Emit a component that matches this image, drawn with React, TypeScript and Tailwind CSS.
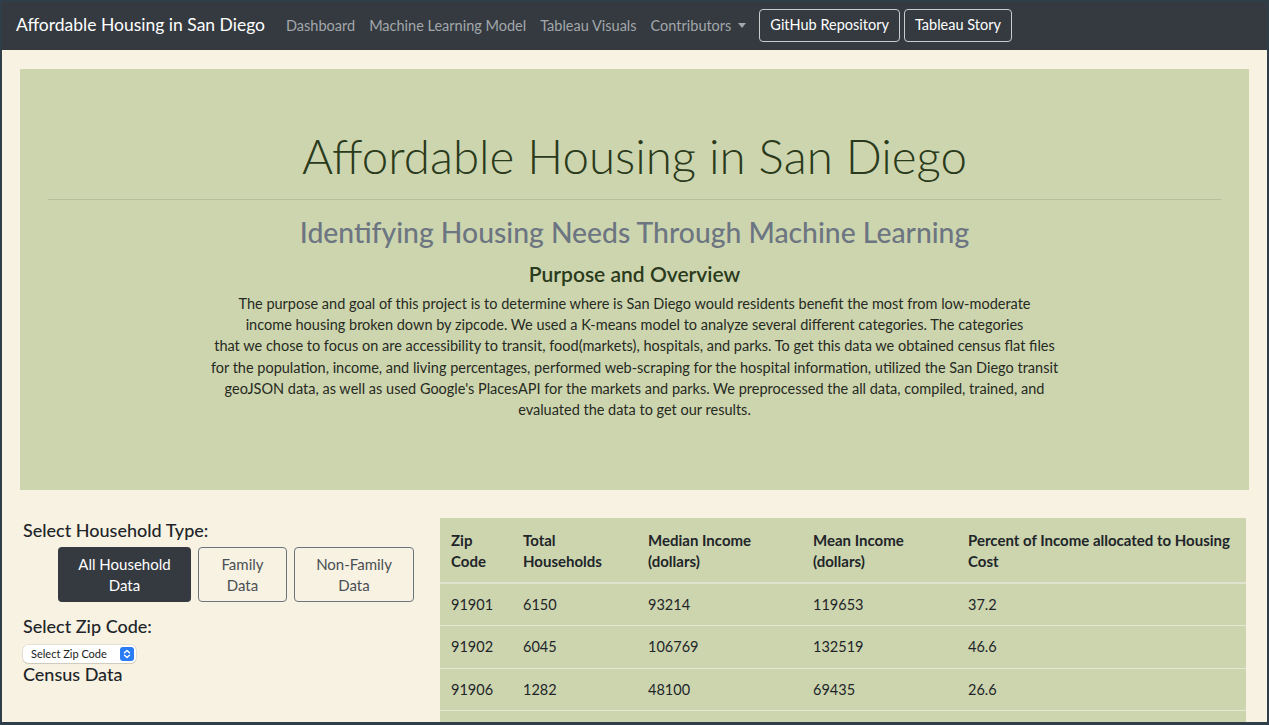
import React from "react";

const rows = [
  ["91901", "6150", "93214", "119653", "37.2"],
  ["91902", "6045", "106769", "132519", "46.6"],
  ["91906", "1282", "48100", "69435", "26.6"],
];

export default function App() {
  return (
    <div
      className="w-[1269px] h-[725px] overflow-hidden bg-[#f8f2e2] border-x-2 border-t-2 border-b-[3px] border-[#2f3e48]"
      style={{ fontFamily: "Lato, 'Liberation Sans', sans-serif" }}
    >
      {/* Navbar */}
      <nav className="h-[48px] bg-[#343a40] flex items-center pl-[14px]">
        <span className="text-white text-[17.5px] mr-[21px] -mt-[1px]">Affordable Housing in San Diego</span>
        <div className="flex items-center gap-[14px] text-[14.5px] text-[#a3a7ab] -mt-[1px]">
          <span>Dashboard</span>
          <span>Machine Learning Model</span>
          <span>Tableau Visuals</span>
          <span className="flex items-center gap-[7px]">
            Contributors
            <span className="inline-block w-0 h-0 border-x-[4px] border-x-transparent border-t-[5px] border-t-[#a3a7ab]" />
          </span>
        </div>
        <div className="flex items-center gap-[4px] ml-[13px] -mt-[2px]">
          <span className="h-[33px] px-[10px] flex items-center border border-[#c9cbcd] rounded-[4px] text-white text-[14.5px]">GitHub Repository</span>
          <span className="h-[33px] px-[10px] flex items-center border border-[#c9cbcd] rounded-[4px] text-white text-[14.5px]">Tableau Story</span>
        </div>
      </nav>

      <div className="px-[18px] pt-[19px]">
        {/* Jumbotron */}
        <div className="h-[421px] bg-[#cdd5af] px-[28px] pt-[51px] text-center">
          <h1 className="text-[47.5px] leading-[72px] font-light text-[#2a3a1b]">Affordable Housing in San Diego</h1>
          <hr className="mt-[7px] border-0 border-t border-[#b7bf9c]" />
          <h2 className="mt-[13px] text-[28.3px] leading-[38px] text-[#6c7581] font-medium">Identifying Housing Needs Through Machine Learning</h2>
          <h3 className="mt-[10px] text-[21px] leading-[26px] font-semibold text-[#2a3a1b]">Purpose and Overview</h3>
          <p className="mt-[6px] text-[14.5px] leading-[21.2px] text-[#262a22]">
            The purpose and goal of this project is to determine where is San Diego would residents benefit the most from low-moderate
            <br />
            income housing broken down by zipcode. We used a K-means model to analyze several different categories. The categories
            <br />
            that we chose to focus on are accessibility to transit, food(markets), hospitals, and parks. To get this data we obtained census flat files
            <br />
            for the population, income, and living percentages, performed web-scraping for the hospital information, utilized the San Diego transit
            <br />
            geoJSON data, as well as used Google's PlacesAPI for the markets and parks. We preprocessed the all data, compiled, trained, and
            <br />
            evaluated the data to get our results.
          </p>
        </div>

        {/* Bottom */}
        <div className="flex mt-[28px]">
          <div className="w-[420px] pl-[3px]">
            <div className="text-[18px] leading-[22px] font-medium text-[#212529] mt-[1px]">Select Household Type:</div>
            <div className="flex gap-[7px] ml-[35px] mt-[6px]">
              <div className="w-[133px] h-[55px] rounded-[4px] bg-[#343a40] text-white text-[15px] leading-[21px] flex flex-col items-center justify-center">
                <span>All Household</span>
                <span>Data</span>
              </div>
              <div className="w-[89px] h-[55px] rounded-[4px] border border-[#6c757d] text-[#4a4f54] text-[15px] leading-[21px] flex flex-col items-center justify-center">
                <span>Family</span>
                <span>Data</span>
              </div>
              <div className="w-[120px] h-[55px] rounded-[4px] border border-[#6c757d] text-[#4a4f54] text-[15px] leading-[21px] flex flex-col items-center justify-center">
                <span>Non-Family</span>
                <span>Data</span>
              </div>
            </div>
            <div className="text-[18px] leading-[22px] font-medium text-[#212529] mt-[13px]">Select Zip Code:</div>
            <div className="mt-[8px] w-[113px] h-[18px] bg-white rounded-[5px] shadow-[0_0_0_0.5px_rgba(0,0,0,0.15),0_1px_1px_rgba(0,0,0,0.1)] flex items-center justify-between pl-[8px] pr-[2px]">
              <span className="text-[11px] text-[#222]">Select Zip Code</span>
              <span className="w-[14px] h-[14px] rounded-[3px] bg-[#2a7cf6] flex items-center justify-center">
                <svg width="8" height="10" viewBox="0 0 8 10" fill="none" stroke="white" strokeWidth="1.4" strokeLinecap="round" strokeLinejoin="round">
                  <path d="M1.5 3.8 L4 1.5 L6.5 3.8" />
                  <path d="M1.5 6.2 L4 8.5 L6.5 6.2" />
                </svg>
              </span>
            </div>
            <div className="text-[18px] leading-[22px] font-medium text-[#212529] mt-[0px]">Census Data</div>
          </div>

          <div className="w-[806px] h-[220px] bg-[#cdd5af]">
            <table className="w-full table-fixed text-[14.5px] text-[#212529] border-collapse">
              <colgroup>
                <col className="w-[72px]" />
                <col className="w-[125px]" />
                <col className="w-[165px]" />
                <col className="w-[155px]" />
                <col />
              </colgroup>
              <thead>
                <tr className="border-b-2 border-[#dfe3cd] text-[15px]">
                  <th className="text-left align-top font-bold px-[11px] pt-[12px] pb-[10px] leading-[21px]">Zip Code</th>
                  <th className="text-left align-top font-bold px-[11px] pt-[12px] pb-[10px] leading-[21px]">Total Households</th>
                  <th className="text-left align-top font-bold px-[11px] pt-[12px] pb-[10px] leading-[21px]">Median Income (dollars)</th>
                  <th className="text-left align-top font-bold px-[11px] pt-[12px] pb-[10px] leading-[21px]">Mean Income (dollars)</th>
                  <th className="text-left align-top font-bold px-[11px] pt-[12px] pb-[10px] leading-[21px]">Percent of Income allocated to Housing Cost</th>
                </tr>
              </thead>
              <tbody>
                {rows.map((r) => (
                  <tr key={r[0]} className="border-b border-[#e3e6d3]">
                    {r.map((c, i) => (
                      <td key={i} className="px-[11px] h-[42.5px] leading-[21px]">{c}</td>
                    ))}
                  </tr>
                ))}
              </tbody>
            </table>
          </div>
        </div>
      </div>
    </div>
  );
}
